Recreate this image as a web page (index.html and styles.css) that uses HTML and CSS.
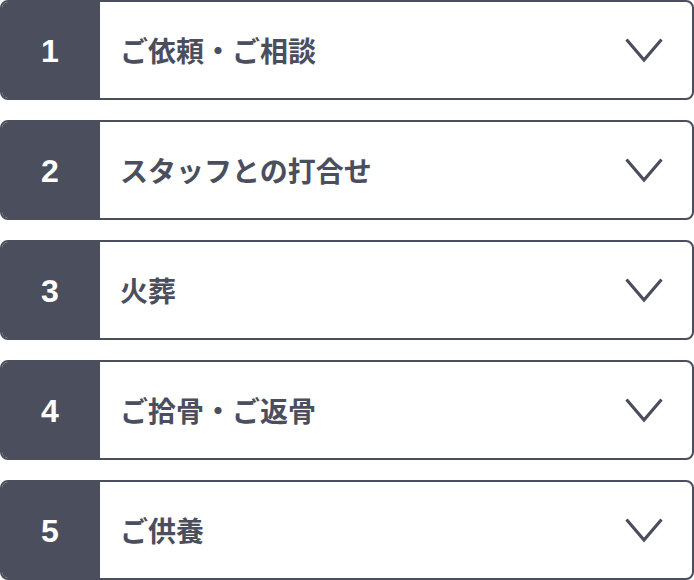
FILE: index.html
```html
<!DOCTYPE html>
<html lang="ja">
<head>
<meta charset="utf-8">
<link rel="stylesheet" href="styles.css">
</head>
<body>
<ul class="steps">
  <li class="step"><span class="num">1</span><span class="label">ご依頼・ご相談</span><svg class="chev" viewBox="0 0 38 25"><polyline points="1.5,1.5 19,22 36.5,1.5"/></svg></li>
  <li class="step"><span class="num">2</span><span class="label">スタッフとの打合せ</span><svg class="chev" viewBox="0 0 38 25"><polyline points="1.5,1.5 19,22 36.5,1.5"/></svg></li>
  <li class="step"><span class="num">3</span><span class="label">火葬</span><svg class="chev" viewBox="0 0 38 25"><polyline points="1.5,1.5 19,22 36.5,1.5"/></svg></li>
  <li class="step"><span class="num">4</span><span class="label">ご拾骨・ご返骨</span><svg class="chev" viewBox="0 0 38 25"><polyline points="1.5,1.5 19,22 36.5,1.5"/></svg></li>
  <li class="step"><span class="num">5</span><span class="label">ご供養</span><svg class="chev" viewBox="0 0 38 25"><polyline points="1.5,1.5 19,22 36.5,1.5"/></svg></li>
</ul>
</body>
</html>
```
FILE: styles.css
```css
html, body {
  margin: 0;
  padding: 0;
  background: #ffffff;
}
.steps {
  list-style: none;
  margin: 0;
  padding: 0;
  width: 694px;
  display: flex;
  flex-direction: column;
  gap: 20px;
}
.step {
  box-sizing: border-box;
  height: 100px;
  border: 2px solid #4b4f5d;
  border-radius: 8px;
  display: flex;
  align-items: center;
  overflow: hidden;
  background: #fff;
}
.num {
  box-sizing: border-box;
  width: 98px;
  align-self: stretch;
  background: #4b4f5d;
  color: #ffffff;
  display: flex;
  align-items: center;
  justify-content: center;
  padding-right: 2px;
  padding-top: 2px;
  font-family: "Liberation Sans", Arial, sans-serif;
  font-weight: 700;
  font-size: 32px;
}
.label {
  flex: 1;
  padding-left: 20px;
  font-family: "Noto Sans CJK JP", sans-serif;
  font-weight: 700;
  font-size: 28px;
  color: #4b4f5d;
  letter-spacing: 0;
}
.chev {
  width: 38px;
  height: 25px;
  margin-right: 29px;
  fill: none;
  stroke: #4b4f5d;
  stroke-width: 3.2;
}
```
